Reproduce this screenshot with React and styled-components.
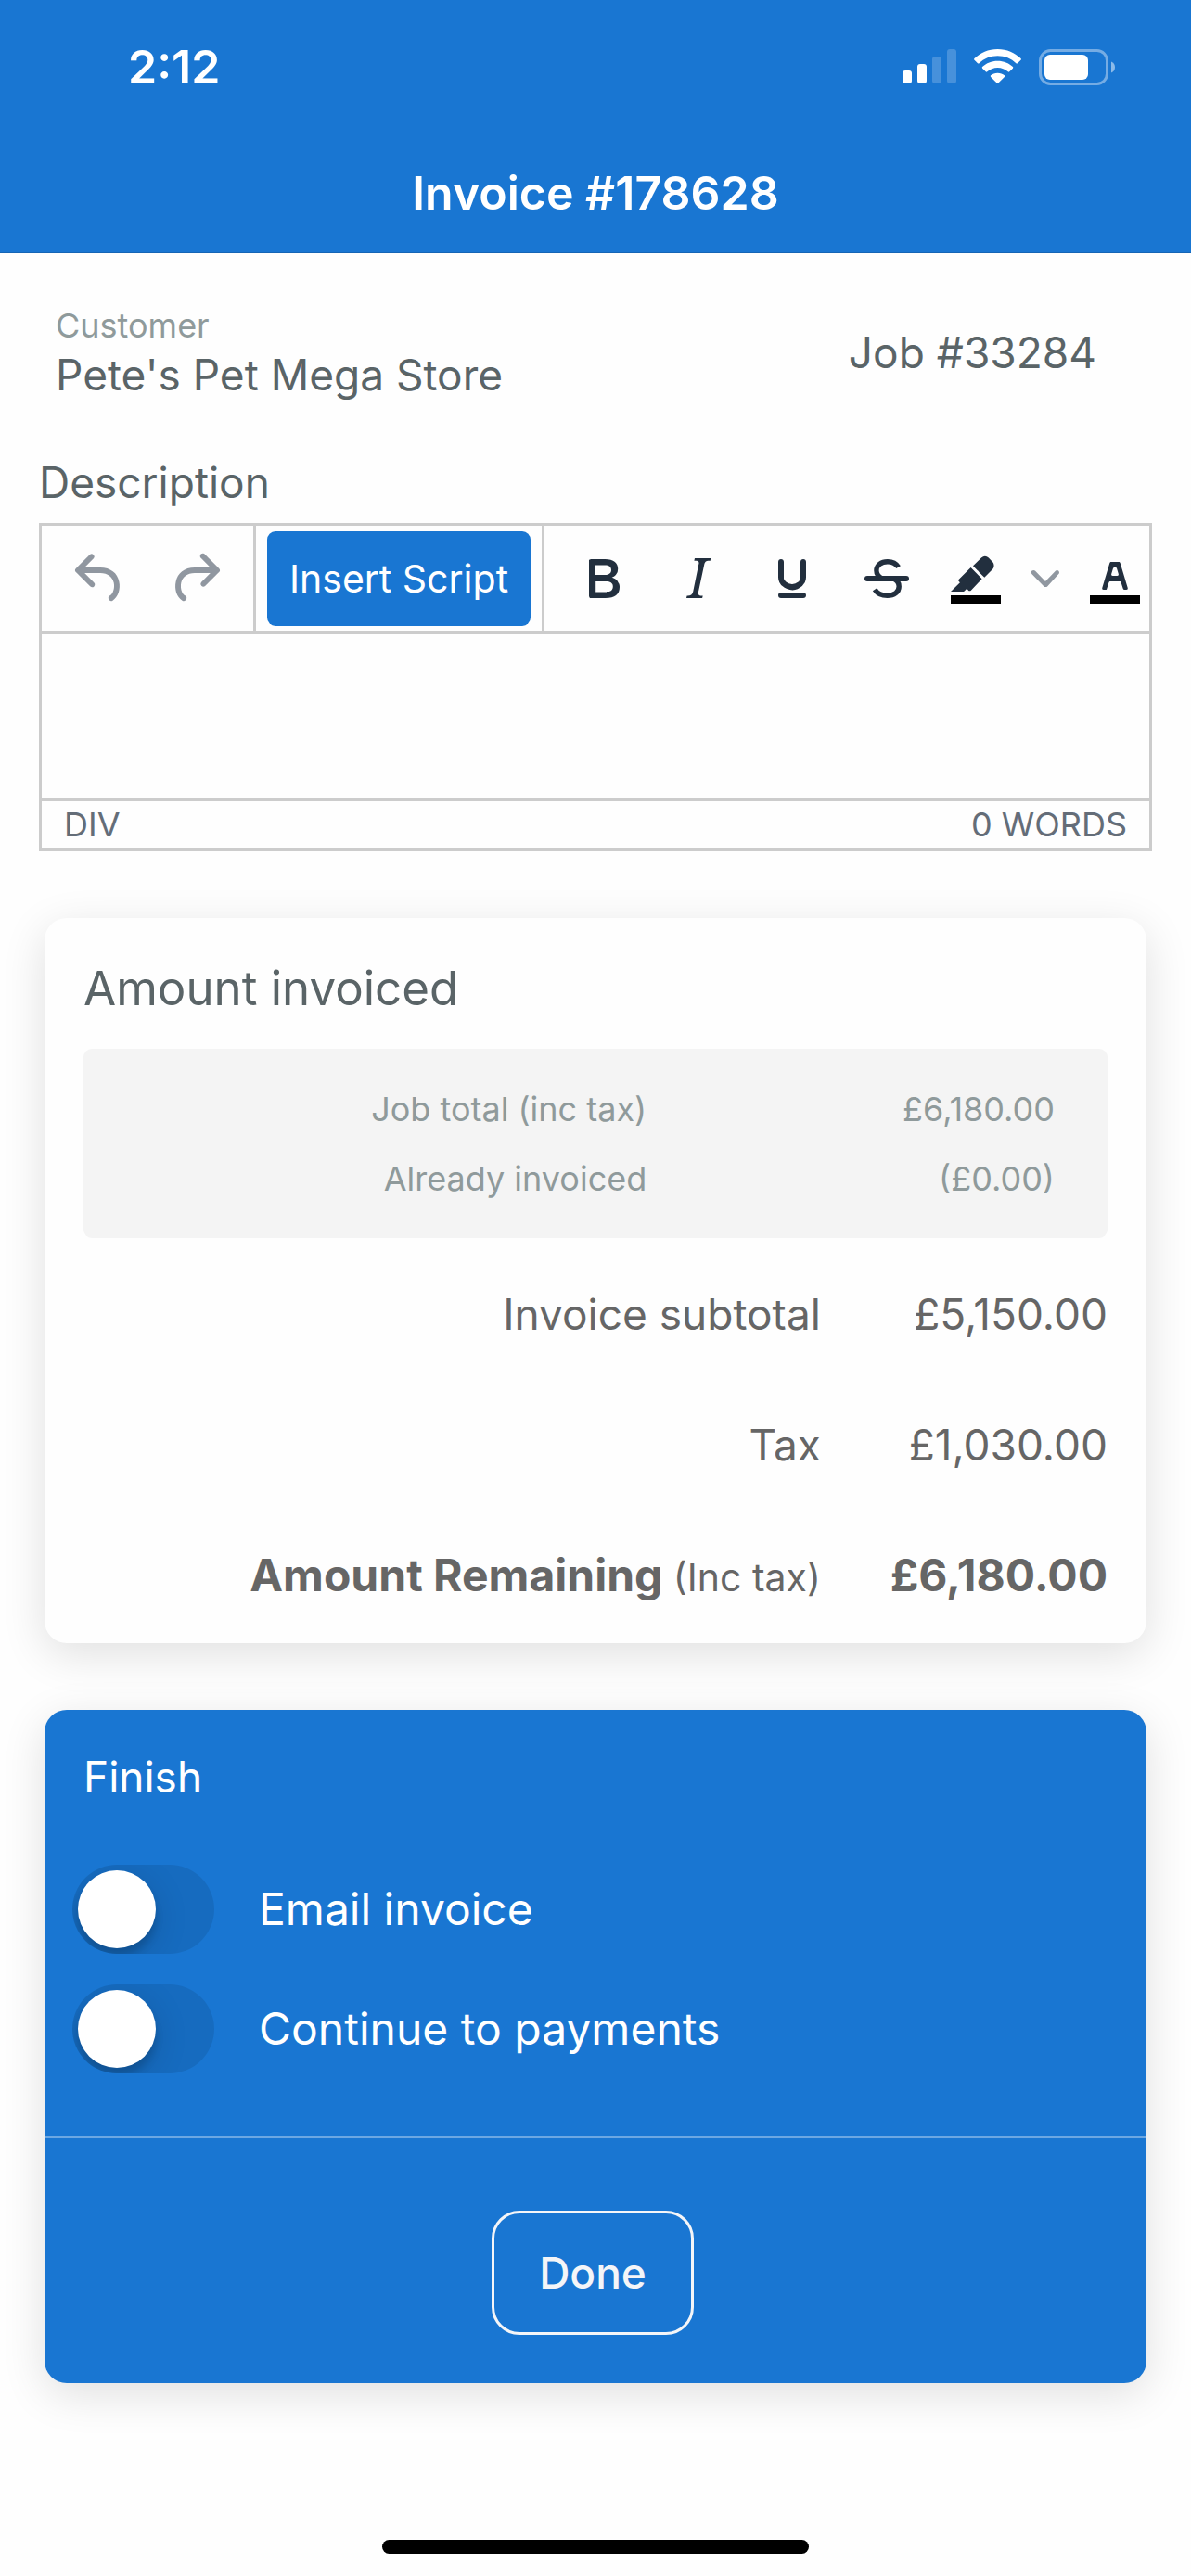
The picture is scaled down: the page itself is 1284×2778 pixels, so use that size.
import React, { useState } from "react";
import styled, { createGlobalStyle } from "styled-components";

const BLUE = "#1976d2";
const GREY_LINE = "#cccccc";

const GlobalStyle = createGlobalStyle`
  * {
    box-sizing: border-box;
  }

  body {
    margin: 0;
    background-color: #fefefe;
    font-family: Inter, "Liberation Sans", sans-serif;
    color: #5a6467;
  }

  button,
  textarea {
    font-family: inherit;
  }
`;

const Page = styled.div`
  display: flex;
  flex-direction: column;
  min-height: 100vh;
`;

const Header = styled.header`
  background-color: ${BLUE};
  color: #fff;
  border-bottom: 1px solid #1565b5;
`;

const StatusBar = styled.div`
  display: flex;
  justify-content: space-between;
  align-items: center;
  height: 144px;
  padding: 0 82px 0 138px;
`;

const Time = styled.span`
  font-size: 50px;
  font-weight: 600;
`;

const StatusIcons = styled.div`
  display: flex;
  align-items: center;
  gap: 19px;

  svg {
    display: block;
  }
`;

const Title = styled.h1`
  margin: 0;
  font-size: 50px;
  font-weight: 600;
  line-height: 128px;
  text-align: center;
`;

const Main = styled.main`
  padding-top: 54px;
`;

const CustomerRow = styled.section`
  display: flex;
  justify-content: space-between;
  align-items: center;
  margin: 0 42px 0 60px;
  padding: 0 60px 13px 0;
  border-bottom: 1px solid #c8c8c8;
`;

const CustomerLabel = styled.div`
  font-size: 36px;
  line-height: 48px;
  color: #8f9a9b;
`;

const CustomerName = styled.div`
  font-size: 46px;
  line-height: 58px;
`;

const JobNumber = styled.div`
  font-size: 46px;
`;

const Description = styled.section`
  margin: 43px 42px 72px;
`;

const DescriptionLabel = styled.label`
  display: block;
  margin-bottom: 14px;
  font-size: 46px;
  line-height: 60px;
`;

const Editor = styled.div`
  border: 3px solid ${GREY_LINE};
`;

const Toolbar = styled.div`
  display: flex;
  height: 117px;
  overflow: hidden;
  border-bottom: 3px solid ${GREY_LINE};
`;

const ToolGroup = styled.div`
  display: flex;
  flex-shrink: 0;
  align-items: center;
  padding: 0 12px;

  & + & {
    border-left: 3px solid ${GREY_LINE};
  }
`;

const ToolButton = styled.button`
  display: flex;
  justify-content: center;
  align-items: center;
  width: ${(props) => props.$width || 102}px;
  height: 84px;
  padding: 0;
  border: none;
  background: none;
  color: ${(props) => (props.$muted ? "#9097a0" : "#222f3e")};
  cursor: pointer;
`;

const ScriptButton = styled.button`
  height: 102px;
  padding: 0 24px;
  border: none;
  border-radius: 9px;
  background-color: ${BLUE};
  color: #fff;
  font-size: 41px;
  cursor: pointer;
`;

const TextArea = styled.textarea`
  display: block;
  width: 100%;
  height: 177px;
  padding: 24px;
  border: none;
  outline: none;
  resize: none;
  background: none;
  color: #222f3e;
  font-size: 46px;
`;

const EditorFooter = styled.div`
  display: flex;
  justify-content: space-between;
  padding: 0 24px;
  border-top: 3px solid ${GREY_LINE};
  font-size: 36px;
  line-height: 51px;
  color: #646d78;
`;

const Card = styled.section`
  margin: 0 48px 72px;
  border-radius: 24px;
  box-shadow: 0 12px 48px rgba(0, 0, 0, 0.12);
`;

const AmountCard = styled(Card)`
  padding: 42px 42px 3px;
  background-color: #fefefe;
`;

const FinishCard = styled(Card)`
  padding-top: 42px;
  background-color: ${BLUE};
  color: #fff;
`;

const AmountTitle = styled.h2`
  margin: 0 0 31px;
  font-size: 51px;
  font-weight: 400;
  line-height: 68px;
`;

const FinishTitle = styled.h2`
  margin: 0 42px 48px;
  font-size: 46px;
  font-weight: 400;
  line-height: 60px;
`;

const JobBox = styled.div`
  padding: 27px 57px 27px 0;
  border-radius: 9px;
  background-color: #f4f4f4;
`;

const AmountTable = styled.table`
  width: 100%;
  border-collapse: collapse;
  table-layout: fixed;

  th,
  td {
    padding: 0;
    font-weight: inherit;
    text-align: right;
    white-space: nowrap;
  }
`;

const JobTable = styled(AmountTable)`
  color: #8f9a9b;
  font-size: 36px;

  th {
    width: 58%;
  }

  tr {
    height: 75px;
  }
`;

const InvoiceTable = styled(AmountTable)`
  margin-top: 11px;
  color: #666;
  font-size: 46px;

  th {
    width: 72%;
  }

  tr {
    height: 141px;
  }
`;

const TotalRow = styled.tr`
  font-size: 48px;
  font-weight: 700;

  small {
    font-size: 41px;
    font-weight: 400;
  }
`;

const ToggleRow = styled.label`
  display: flex;
  align-items: center;
  gap: 48px;
  height: 129px;
  padding: 0 30px;
  font-size: 48px;
  cursor: pointer;
`;

const Toggle = styled.input`
  appearance: none;
  display: flex;
  flex-shrink: 0;
  width: 153px;
  height: 96px;
  margin: 0;
  padding: 6px;
  border-radius: 48px;
  overflow: hidden;
  background-color: rgba(0, 0, 0, 0.09);
  cursor: pointer;

  &::before {
    content: "";
    width: 84px;
    height: 84px;
    border-radius: 50%;
    background-color: #fff;
    box-shadow: 0 9px 36px rgba(0, 0, 0, 0.15), 0 9px 9px rgba(0, 0, 0, 0.15);
  }

  &:checked {
    justify-content: flex-end;
    background-color: rgba(255, 255, 255, 0.4);
  }
`;

const FinishFooter = styled.div`
  display: flex;
  justify-content: center;
  margin-top: 51px;
  padding: 78px 6px 52px 0;
  border-top: 3px solid rgba(255, 255, 255, 0.36);
`;

const DoneButton = styled.button`
  height: 134px;
  padding: 0 48px;
  border: 3px solid #f4f5f8;
  border-radius: 30px;
  background: none;
  color: #f4f5f8;
  font-size: 46px;
  font-weight: 500;
  cursor: pointer;
`;

const HomeIndicator = styled.div`
  width: 460px;
  height: 15px;
  margin: auto auto 24px;
  border-radius: 8px;
  background-color: #000;
`;

const SignalIcon = () => (
  <svg width="58" height="38" viewBox="0 0 58 38" fill="#fff">
    <rect x="0" y="23" width="10" height="14" rx="3" />
    <rect x="16" y="16" width="10" height="21" rx="3" />
    <rect x="32" y="8" width="10" height="29" rx="3" opacity="0.2" />
    <rect x="48" y="0" width="10" height="37" rx="3" opacity="0.2" />
  </svg>
);

const WifiIcon = () => (
  <svg width="51" height="38" viewBox="0 0 51 38" fill="#fff">
    <path d="M25.500 0C35.500 0 44.200 3.900 50.500 10.100Q51.300 10.900 50.500 11.700L47 15.200Q46.200 16 45.400 15.200C40.200 10.300 33.200 7.300 25.500 7.300S10.800 10.300 5.600 15.200Q4.800 16 4 15.200L.5 11.700Q-.3 10.900.5 10.100C6.800 3.900 15.500 0 25.500 0Z" />
    <path d="M25.500 12.800C32 12.800 37.700 15.200 41.900 19.100Q42.700 19.900 41.900 20.700L38.300 24.200Q37.500 25 36.700 24.300C33.700 21.700 29.800 20.100 25.500 20.100S17.300 21.700 14.300 24.300Q13.500 25 12.700 24.200L9.100 20.700Q8.300 19.900 9.100 19.100C13.300 15.200 19 12.800 25.500 12.800Z" />
    <path d="M25.500 25.700C28.400 25.700 31 26.700 32.900 28.300Q33.700 29 32.900 29.900L26.300 36.500Q25.500 37.300 24.700 36.500L18.100 29.900Q17.300 29 18.100 28.300C20 26.700 22.600 25.700 25.500 25.700Z" />
  </svg>
);

const BatteryIcon = () => (
  <svg width="82" height="39" viewBox="0 0 82 39" fill="#fff">
    <rect
      x="1.500"
      y="1.500"
      width="72"
      height="36"
      rx="11"
      fill="none"
      stroke="#fff"
      strokeWidth="3"
      opacity="0.4"
    />
    <rect x="6" y="6" width="47" height="27" rx="6" />
    <path d="M78 13.500C80.500 14.500 82 16.800 82 19.500S80.500 24.500 78 25.500Z" opacity="0.5" />
  </svg>
);

const EditorIcon = ({ children }) => (
  <svg width="72" height="72" viewBox="0 0 24 24" fill="currentColor">
    {children}
  </svg>
);

const UndoIcon = () => (
  <EditorIcon>
    <path d="M6.400 8H12c3.700 0 6.200 2 6.800 5.100.6 2.700-.4 5.600-2.300 6.800a1 1 0 0 1-1-1.800c1.100-.6 1.800-2.700 1.400-4.600-.5-2.100-2.100-3.500-4.900-3.500H6.400l3.300 3.300a1 1 0 1 1-1.400 1.400l-5-5a1 1 0 0 1 0-1.400l5-5a1 1 0 0 1 1.400 1.400L6.400 8Z" />
  </EditorIcon>
);

const RedoIcon = () => (
  <EditorIcon>
    <path d="M17.600 10H12c-2.800 0-4.400 1.400-4.900 3.500-.4 2 .3 4 1.400 4.600a1 1 0 1 1-1 1.800c-2-1.200-2.900-4.100-2.300-6.800.6-3 3-5.100 6.800-5.100h5.600l-3.300-3.300a1 1 0 1 1 1.400-1.400l5 5a1 1 0 0 1 0 1.400l-5 5a1 1 0 0 1-1.400-1.400l3.300-3.300Z" />
  </EditorIcon>
);

const BoldIcon = () => (
  <EditorIcon>
    <path
      fillRule="evenodd"
      d="M7.800 19c-.3 0-.5 0-.6-.2l-.2-.5V5.700c0-.2 0-.4.2-.5l.6-.2h5c1.500 0 2.700.3 3.500 1 .7.6 1.100 1.400 1.100 2.500a3 3 0 0 1-.6 1.900c-.4.6-1 1-1.600 1.200.4.1.9.3 1.300.6s.8.700 1 1.200c.4.400.5 1 .5 1.600 0 1.300-.4 2.300-1.300 3-.8.700-2.100 1-3.800 1H7.800Zm5-8.300c.6 0 1.200-.1 1.600-.5.400-.3.600-.7.600-1.300 0-1.100-.8-1.700-2.300-1.700H9.300v3.500h3.400Zm.5 6c.7 0 1.300-.1 1.700-.4.400-.4.600-.9.600-1.500s-.2-1-.7-1.400c-.4-.3-1-.4-2-.4H9.400v3.800h4Z"
    />
  </EditorIcon>
);

const ItalicIcon = () => (
  <EditorIcon>
    <path
      fillRule="evenodd"
      d="m16.700 4.700-.1.900h-.3c-.6 0-1 0-1.400.3-.3.300-.4.600-.5 1.100l-2.100 9.800v.6c0 .5.400.8 1.400.8h.2l-.2.800H8l.2-.8h.2c1.100 0 1.800-.5 2-1.500l2-9.800.1-.5c0-.6-.4-.8-1.400-.8h-.3l.2-.9h5.800Z"
    />
  </EditorIcon>
);

const UnderlineIcon = () => (
  <EditorIcon>
    <path d="M16 5c.6 0 1 .4 1 1v5.500a4 4 0 0 1-.4 1.800l-1 1.400a5.300 5.300 0 0 1-5.500 1 5 5 0 0 1-1.600-1c-.5-.4-.8-.9-1.100-1.400a4 4 0 0 1-.4-1.800V6c0-.6.4-1 1-1s1 .4 1 1v5.500c0 .3 0 .6.2 1l.6.700a3.300 3.300 0 0 0 2.200.8 3.400 3.400 0 0 0 2.200-.8c.3-.2.400-.5.6-.8l.2-.9V6c0-.6.4-1 1-1ZM8 17h8c.6 0 1 .4 1 1s-.4 1-1 1H8a1 1 0 0 1 0-2Z" />
  </EditorIcon>
);

const StrikeIcon = () => (
  <EditorIcon>
    <rect x="4" y="11" width="16" height="2" rx="1" />
    <g fill="none" stroke="currentColor" strokeWidth="1.800">
      <path d="M16.200 7.900C15.400 6.600 13.900 5.900 12.300 5.900 10 5.900 8.300 7.200 8.300 9.100 8.300 10.300 9 11.300 10.300 12" />
      <path d="M14.500 12C15.700 12.600 16.400 13.600 16.400 14.800 16.400 16.800 14.700 18.100 12.200 18.100 10.200 18.100 8.600 17.300 7.700 15.900" />
    </g>
  </EditorIcon>
);

const HighlightIcon = () => (
  <EditorIcon>
    <path d="M3 18h18v3H3z" fill="#000" />
    <path
      fillRule="evenodd"
      d="M7.700 16.700H3l3.300-3.300-.7-.8L10.200 8l4 4.100-4 4.200c-.2.200-.6.200-.8 0l-.6-.7-1.100 1.100Zm5-7.500L11 7.400l3-2.900a2 2 0 0 1 2.600 0L18 6c.7.700.7 2 0 2.700l-2.900 2.900-1.800-1.800-.5-.6Z"
    />
  </EditorIcon>
);

const TextColorIcon = () => (
  <EditorIcon>
    <path d="M3 18h18v3H3z" fill="#000" />
    <path
      fillRule="evenodd"
      d="M8.700 16h-.8a.5.500 0 0 1-.5-.6l2.700-9c.1-.3.300-.4.500-.4h2.800c.2 0 .4.100.5.400l2.700 9a.5.500 0 0 1-.5.600h-.8a.5.500 0 0 1-.4-.4l-.7-2.200c0-.3-.3-.4-.5-.4h-3.400c-.2 0-.4.100-.5.400l-.7 2.200c0 .3-.2.400-.4.400Zm2.600-7.600-.6 2a.5.500 0 0 0 .5.600h1.600a.5.500 0 0 0 .5-.6l-.6-2c0-.3-.3-.4-.5-.4h-.4c-.2 0-.4.100-.5.400Z"
    />
  </EditorIcon>
);

const ChevronIcon = () => (
  <svg width="30" height="30" viewBox="0 0 10 10" fill="currentColor">
    <path d="M8.700 2.200c.3-.3.800-.3 1 0 .4.400.4.900 0 1.200L5.700 7.800c-.3.300-.9.300-1.200 0L.2 3.400a.8.800 0 0 1 0-1.200c.3-.3.800-.3 1.100 0L5 6l3.700-3.800Z" />
  </svg>
);

const App = () => {
  const [text, setText] = useState("");
  const [emailInvoice, setEmailInvoice] = useState(false);
  const [continuePayments, setContinuePayments] = useState(false);

  const wordCount = text.split(/\s+/).filter(Boolean).length;

  return (
    <Page>
      <GlobalStyle />
      <Header>
        <StatusBar>
          <Time>2:12</Time>
          <StatusIcons>
            <SignalIcon />
            <WifiIcon />
            <BatteryIcon />
          </StatusIcons>
        </StatusBar>
        <Title>Invoice #178628</Title>
      </Header>

      <Main>
        <CustomerRow>
          <div>
            <CustomerLabel>Customer</CustomerLabel>
            <CustomerName>Pete's Pet Mega Store</CustomerName>
          </div>
          <JobNumber>Job #33284</JobNumber>
        </CustomerRow>

        <Description>
          <DescriptionLabel htmlFor="description">Description</DescriptionLabel>
          <Editor>
            <Toolbar>
              <ToolGroup>
                <ToolButton type="button" aria-label="Undo" $muted>
                  <UndoIcon />
                </ToolButton>
                <ToolButton type="button" aria-label="Redo" $muted>
                  <RedoIcon />
                </ToolButton>
              </ToolGroup>
              <ToolGroup>
                <ScriptButton type="button">Insert Script</ScriptButton>
              </ToolGroup>
              <ToolGroup>
                <ToolButton type="button" aria-label="Bold">
                  <BoldIcon />
                </ToolButton>
                <ToolButton type="button" aria-label="Italic">
                  <ItalicIcon />
                </ToolButton>
                <ToolButton type="button" aria-label="Underline">
                  <UnderlineIcon />
                </ToolButton>
                <ToolButton type="button" aria-label="Strikethrough">
                  <StrikeIcon />
                </ToolButton>
                <ToolButton type="button" aria-label="Background color" $width={90}>
                  <HighlightIcon />
                </ToolButton>
                <ToolButton type="button" aria-label="Background color menu" $width={60} $muted>
                  <ChevronIcon />
                </ToolButton>
                <ToolButton type="button" aria-label="Text color" $width={90}>
                  <TextColorIcon />
                </ToolButton>
              </ToolGroup>
            </Toolbar>
            <TextArea
              id="description"
              value={text}
              onChange={(e) => setText(e.target.value)}
            />
            <EditorFooter>
              <span>DIV</span>
              <span>{wordCount} WORDS</span>
            </EditorFooter>
          </Editor>
        </Description>

        <AmountCard>
          <AmountTitle>Amount invoiced</AmountTitle>
          <JobBox>
            <JobTable>
              <tbody>
                <tr>
                  <th scope="row">Job total (inc tax)</th>
                  <td>£6,180.00</td>
                </tr>
                <tr>
                  <th scope="row">Already invoiced</th>
                  <td>(£0.00)</td>
                </tr>
              </tbody>
            </JobTable>
          </JobBox>
          <InvoiceTable>
            <tbody>
              <tr>
                <th scope="row">Invoice subtotal</th>
                <td>£5,150.00</td>
              </tr>
              <tr>
                <th scope="row">Tax</th>
                <td>£1,030.00</td>
              </tr>
              <TotalRow>
                <th scope="row">
                  Amount Remaining <small>(Inc tax)</small>
                </th>
                <td>£6,180.00</td>
              </TotalRow>
            </tbody>
          </InvoiceTable>
        </AmountCard>

        <FinishCard>
          <FinishTitle>Finish</FinishTitle>
          <ToggleRow>
            <Toggle
              type="checkbox"
              checked={emailInvoice}
              onChange={(e) => setEmailInvoice(e.target.checked)}
            />
            Email invoice
          </ToggleRow>
          <ToggleRow>
            <Toggle
              type="checkbox"
              checked={continuePayments}
              onChange={(e) => setContinuePayments(e.target.checked)}
            />
            Continue to payments
          </ToggleRow>
          <FinishFooter>
            <DoneButton type="button">Done</DoneButton>
          </FinishFooter>
        </FinishCard>
      </Main>

      <HomeIndicator />
    </Page>
  );
};

export default App;
